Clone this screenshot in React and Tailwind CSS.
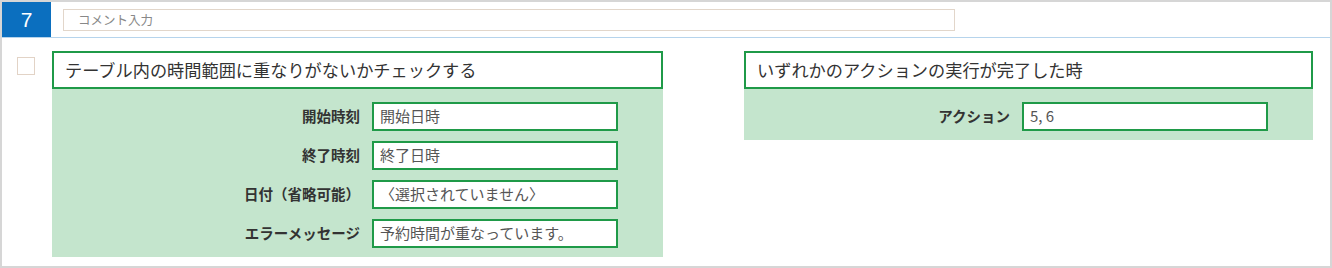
import React from 'react';

const FONT = { fontFamily: '"Noto Sans CJK JP", "Noto Sans", sans-serif' };

const Field = ({ label, value }) => (
  <div className="flex items-center justify-end pr-[45px]">
    <span className="mr-[12px] text-[14.5px] font-bold leading-none text-[#333333]">{label}</span>
    <div className="flex h-[29px] w-[246px] items-center border-2 border-[#1f9a48] bg-white px-[6px] text-[15px] text-[#555555]">
      {value}
    </div>
  </div>
);

const Panel = ({ title, width, fields }) => (
  <div className={`flex flex-col ${width}`}>
    <div className="flex h-[38px] items-center border-2 border-[#1f9a48] bg-white px-[11px] text-[17.2px] text-[#333333]">
      {title}
    </div>
    <div className="flex flex-col gap-[10px] bg-[#c4e5cd] pt-[13px] pb-[9px]">
      {fields.map((f) => (
        <Field key={f.label} label={f.label} value={f.value} />
      ))}
    </div>
  </div>
);

export default function App() {
  return (
    <div style={FONT} className="h-[268px] w-[1332px] border-2 border-[#d6d6d6] bg-white">
      <div className="flex h-[36px] border-b border-[#b6d4ec]">
        <div className="flex h-[35px] w-[49px] items-center justify-center bg-[#0b6fbf] text-[21px] text-white" style={{ fontFamily: '"Liberation Sans", sans-serif' }}>
          7
        </div>
        <div className="ml-[12px] mt-[7px] flex h-[22px] w-[892px] items-center border border-[#e2d6ca] px-[14px] text-[12.5px] text-[#888888]">
          コメント入力
        </div>
      </div>
      <div className="flex items-start pl-[15px] pt-[13px]">
        <div className="mt-[6px] h-[18px] w-[18px] border border-[#e2d3c6] bg-white" />
        <div className="ml-[17px]">
          <Panel
            title="テーブル内の時間範囲に重なりがないかチェックする"
            width="w-[611px]"
            fields={[
              { label: '開始時刻', value: '開始日時' },
              { label: '終了時刻', value: '終了日時' },
              { label: '日付（省略可能）', value: '〈選択されていません〉' },
              { label: 'エラーメッセージ', value: '予約時間が重なっています。' },
            ]}
          />
        </div>
        <div className="ml-[81px]">
          <Panel
            title="いずれかのアクションの実行が完了した時"
            width="w-[569px]"
            fields={[{ label: 'アクション', value: '5, 6' }]}
          />
        </div>
      </div>
    </div>
  );
}
